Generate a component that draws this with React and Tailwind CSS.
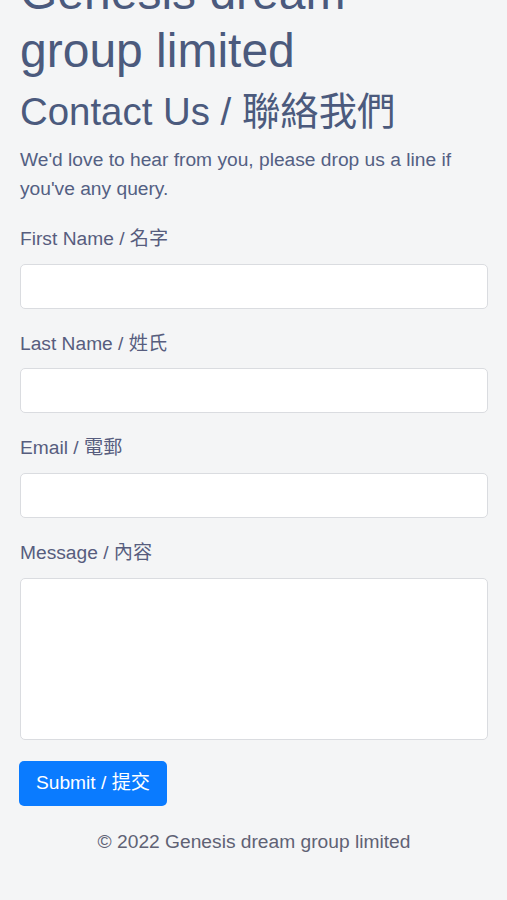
export default function App() {
    const fields = [
        { id: 'firstName', label: 'First Name / 名字', type: 'text' },
        { id: 'lastName', label: 'Last Name / 姓氏', type: 'text' },
        { id: 'email', label: 'Email / 電郵', type: 'email' },
    ];

    return (
        <div
            className="min-h-[900px] bg-[#f4f5f6] px-[20px] pr-[19px] overflow-hidden"
            style={{ fontFamily: '"Liberation Sans", "Noto Sans CJK TC", sans-serif' }}
        >
            <h1 className="-mt-[36px] mb-[10px] text-[48px] leading-[57.6px] text-[#4b5a7d]">
                Genesis dream<br />group limited
            </h1>
            <h2 className="mb-[11px] text-[38.4px] leading-[46px] text-[#4b5a7d]">
                Contact Us / 聯絡我們
            </h2>
            <p className="mb-[21px] text-[19.2px] leading-[28.8px] text-[#536083]">
                We'd love to hear from you, please drop us a line if you've any query.
            </p>
            <form onSubmit={(e) => e.preventDefault()}>
                {fields.map((f) => (
                    <div key={f.id} className="mb-[21px]">
                        <label htmlFor={f.id} className="block mb-[10px] text-[19.2px] leading-[28.8px] text-[#575d7e]">
                            {f.label}
                        </label>
                        <input
                            type={f.type}
                            id={f.id}
                            className="block w-full h-[45px] px-3 bg-white border border-[#dadce0] rounded-[5px] outline-none"
                        />
                    </div>
                ))}
                <div className="mb-[21px]">
                    <label htmlFor="message" className="block mb-[10px] text-[19.2px] leading-[28.8px] text-[#575d7e]">
                        Message / 內容
                    </label>
                    <textarea
                        id="message"
                        className="block w-full h-[162px] px-3 py-2 bg-white border border-[#dadce0] rounded-[5px] outline-none resize-none"
                    ></textarea>
                </div>
                <button
                    type="submit"
                    className="h-[45px] w-[148px] -ml-px bg-[#0a7bff] text-white text-[19.2px] rounded-[5px]"
                >
                    Submit / 提交
                </button>
            </form>
            <footer className="mt-[22px] text-center text-[19.2px] leading-[28.8px] text-[#5f6274]">
                © 2022 Genesis dream group limited
            </footer>
        </div>
    );
}
